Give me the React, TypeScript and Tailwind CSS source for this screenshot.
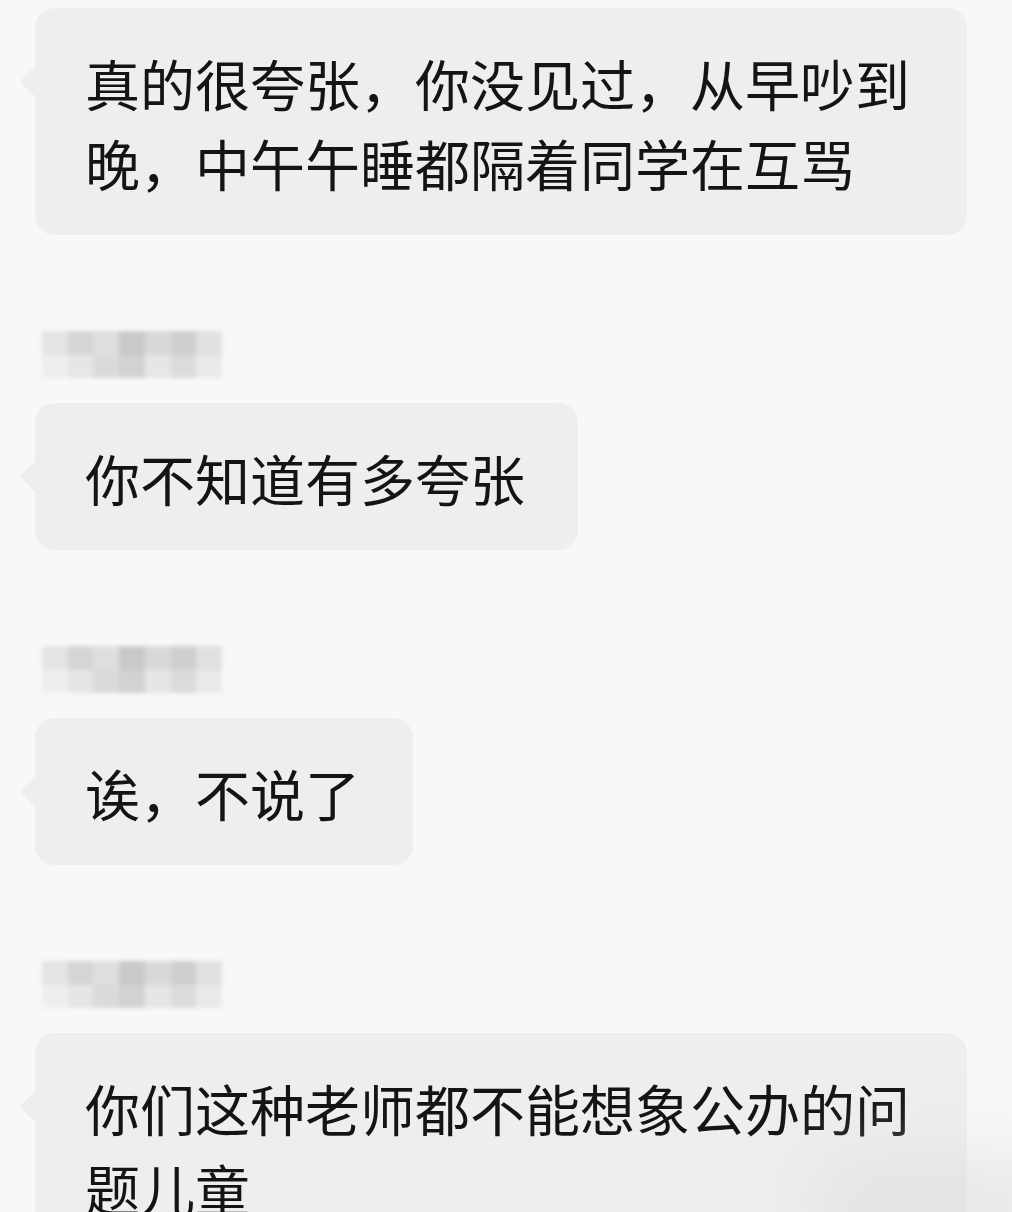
import React from "react";

const shades = [
  ["#e4e4e6", "#d5d5d7", "#dedee0", "#c9c9cb", "#d8d8da", "#cfcfd1", "#e0e0e2"],
  ["#eeeeef", "#e6e6e8", "#dadadc", "#d2d2d4", "#e6e6e8", "#dbdbdd", "#e9e9eb"],
];

const BlurName = () => (
  <div className="ml-[42px] h-[47px] w-[180px] blur-[2px]">
    {shades.map((row, i) => (
      <div key={i} className="flex h-1/2">
        {row.map((c, j) => (
          <div key={j} className="h-full flex-1" style={{ backgroundColor: c }} />
        ))}
      </div>
    ))}
  </div>
);

const Bubble = ({ text }: { text: string }) => (
  <div className="relative ml-[35px] w-fit max-w-[932px]">
    <div className="absolute left-[-11px] top-[63px] h-[21px] w-[21px] rotate-45 rounded-[3px] bg-[#eeeef0]" />
    <div className="relative rounded-[20px] bg-[#eeeef0] pb-[33px] pl-[50px] pr-[53px] pt-[34px] text-[55px] leading-[80px] text-[#141414]">
      {text}
    </div>
  </div>
);

const messages = [
  { name: false, text: "真的很夸张，你没见过，从早吵到晚，中午午睡都隔着同学在互骂" },
  { name: true, text: "你不知道有多夸张" },
  { name: true, text: "诶，不说了" },
  { name: true, text: "你们这种老师都不能想象公办的问题儿童" },
];

export default function App() {
  return (
    <div
      className="relative h-[1212px] w-[1012px] overflow-hidden bg-[#f8f8f8] pt-[8px]"
      style={{ fontFamily: '"Noto Sans CJK SC", "Noto Sans", sans-serif' }}
    >
      <div className="flex flex-col gap-[96px]">
        {messages.map((m, i) => (
          <div key={i} className="flex flex-col">
            {m.name && (
              <div className="mb-[25px]">
                <BlurName />
              </div>
            )}
            <Bubble text={m.text} />
          </div>
        ))}
      </div>
      <div className="pointer-events-none absolute bottom-[-40px] right-[-60px] h-[90px] w-[260px] rounded-full bg-[#d8d8da] opacity-60 blur-2xl" />
    </div>
  );
}
